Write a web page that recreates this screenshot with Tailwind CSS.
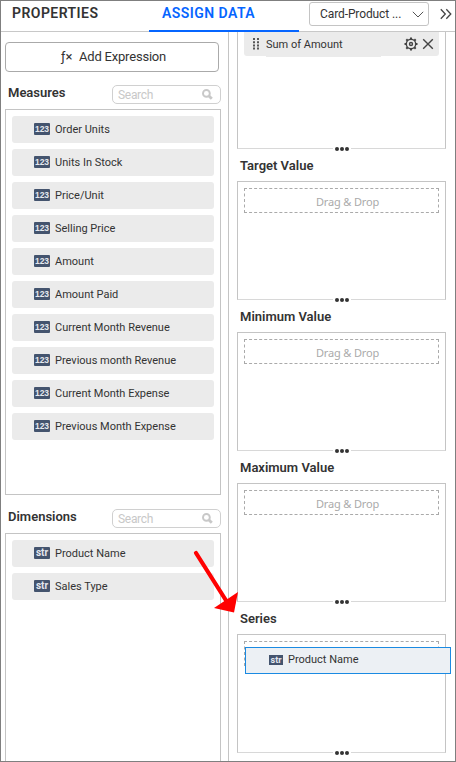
<!DOCTYPE html>
<html lang="en">
<head>
<meta charset="utf-8">
<title>Assign Data</title>
<script src="https://cdn.jsdelivr.net/npm/@tailwindcss/browser@4"></script>
</head>
<body class="bg-white">
<div class="relative flex h-[762px] w-[456px] flex-col overflow-hidden border border-[#7f7f7f] bg-white font-[Roboto,sans-serif] text-[#333]">
  <header class="flex h-[31px] shrink-0 border-b border-[#c8c8c8]">
    <div class="w-[148px] pl-[11px] pt-[2px] text-[14px] leading-[20px] font-semibold tracking-[0.45px] whitespace-nowrap">PROPERTIES</div>
    <div class="h-[31px] w-[150px] border-b-2 border-[#0565ff] pl-[13px] pt-[2px] text-[14px] leading-[20px] font-semibold tracking-[0.45px] whitespace-nowrap text-[#0565ff]">ASSIGN DATA</div>
    <div class="mt-px ml-[10px] flex h-6 w-[120px] items-center justify-between rounded-[3px] border border-[#c4c4c4] pr-1 pl-[10px] text-[12px]">
      <span class="tracking-[-0.1px] whitespace-nowrap">Card-Product ...</span>
      <svg class="h-[7px] w-[12px]" viewBox="0 0 12 7" fill="none" stroke="#555"><path d="M.8.8 6 6 11.2.8"/></svg>
    </div>
    <svg class="mt-[7px] ml-[11px] h-[12px] w-[12px]" viewBox="0 0 12 12" fill="none" stroke="#444" stroke-width="1.3"><path d="M.8 1.2 5.3 6 .8 10.8M6.3 1.2 10.8 6l-4.5 4.8"/></svg>
  </header>

  <div class="flex min-h-0 flex-1">
    <aside class="flex w-[228px] shrink-0 flex-col border-r border-[#c4c4c4] pt-[10px] pr-[7px] pl-1">
      <button class="flex h-[30px] w-[214px] shrink-0 items-center rounded-[4px] border border-[#aaa] pl-[55px] text-[13px]">
        <span class="w-[18px] text-left whitespace-nowrap">ƒ×</span><span class="tracking-[-0.2px]">Add Expression</span>
      </button>
      <div class="mt-[13px] flex h-[19px] shrink-0 items-center justify-between">
        <h2 class="relative -top-[2px] pl-[3px] text-[13px] font-semibold">Measures</h2>
        <div class="flex h-[19px] w-[109px] items-center justify-between rounded-[5px] border border-[#d0d0d0] pr-[7px] pl-[5px] text-[12px] tracking-[-0.3px] text-[#c8c8c8]"><span>Search</span>
          <svg class="h-[11px] w-[11px]" viewBox="0 0 11 11" fill="none" stroke="#c8c8c8" stroke-width="1.9"><circle cx="4.4" cy="4.4" r="3.4"/><path d="m7 7 2.8 2.8" stroke-width="2.8"/></svg>
        </div>
      </div>
      <div id="measures" class="mt-[5px] flex h-[386px] shrink-0 flex-col gap-1.5 border border-[#c4c4c4] p-1.5"></div>
      <div class="mt-[14px] flex h-[19px] shrink-0 items-center justify-between">
        <h2 class="relative -top-[2px] pl-[3px] text-[13px] font-semibold">Dimensions</h2>
        <div class="flex h-[19px] w-[109px] items-center justify-between rounded-[5px] border border-[#d0d0d0] pr-[7px] pl-[5px] text-[12px] tracking-[-0.3px] text-[#c8c8c8]"><span>Search</span>
          <svg class="h-[11px] w-[11px]" viewBox="0 0 11 11" fill="none" stroke="#c8c8c8" stroke-width="1.9"><circle cx="4.4" cy="4.4" r="3.4"/><path d="m7 7 2.8 2.8" stroke-width="2.8"/></svg>
        </div>
      </div>
      <div id="dimensions" class="mt-[5px] flex flex-1 flex-col gap-1.5 border border-b-0 border-[#c4c4c4] p-1.5"></div>
    </aside>

    <main id="zones" class="w-[226px] pl-2">
      <section class="relative h-[117px] w-[209px] border border-t-0 border-b-[#d8d8d8] border-[#c4c4c4] px-1.5">
        <div class="flex h-6 items-center rounded-b-[3px] bg-[#ebebeb] pr-[5px] pl-[9px]">
          <svg class="h-[12px] w-[6px]" viewBox="0 0 6 12" fill="#555"><path d="M0 0h2v2H0zM4 0h2v2H4zM0 3.2h2v2H0zM4 3.2h2v2H4zM0 6.4h2v2H0zM4 6.4h2v2H4zM0 9.6h2v2H0zM4 9.6h2v2H4z"/></svg>
          <span class="ml-[7px] flex-1 pt-[2px] text-[11px]">Sum of Amount</span>
          <svg class="h-[14px] w-[14px]" viewBox="0 0 14 14" fill="none" stroke="#444"><circle cx="7" cy="7" r="4.7" stroke-width="1.4"/><circle cx="7" cy="7" r="1.5" stroke-width="1.4"/><path d="M7 .5v2M7 11.5v2M.5 7h2M11.5 7h2M2.3 2.3l1.4 1.4M10.3 10.3l1.4 1.4M11.7 2.3l-1.4 1.4M3.7 10.3l-1.4 1.4" stroke-width="2"/></svg>
          <svg class="ml-[4px] h-[12px] w-[12px]" viewBox="0 0 12 12" fill="none" stroke="#444" stroke-width="1.4"><path d="m1.2 1.2 9.6 9.6M10.8 1.2l-9.6 9.6"/></svg>
        </div>
        <div class="ml-[22px] h-px w-[115px] bg-[#ebebeb]"></div>
        <div class="absolute -bottom-[3px] left-[95px] flex h-[5px] w-[18px] items-center justify-center gap-px bg-white"><i class="size-1 rounded-full bg-[#333]"></i><i class="size-1 rounded-full bg-[#333]"></i><i class="size-1 rounded-full bg-[#333]"></i></div>
      </section>
    </main>
  </div>

  <div class="absolute top-[646px] left-[244px] flex h-[27px] w-[206px] items-center border border-[#1a8ae2] bg-[#ecf0f4] pl-[23px] text-[11px]">
    <span class="mb-px flex h-[10px] w-[14px] items-center justify-center bg-[#44546e] text-[9px] leading-[10px] font-bold text-[#e4e8ee]">str</span>
    <span class="ml-[5px]">Product Name</span>
  </div>
  <svg class="absolute top-[549px] left-[192px] h-[66px] w-[48px]" viewBox="193 550 48 66"><path d="m196 553 31 49" stroke="red" stroke-width="4.2" stroke-linecap="round"/><path d="m238 592-24 16 20 4.5z" fill="red"/></svg>
</div>
<script>
  const field = (tag, name) => `<div class="flex h-[27px] shrink-0 items-center rounded-[3px] bg-[#ebebeb] pl-[22px] text-[11px]"><span class="mb-px flex h-[12px] w-4 items-center justify-center rounded-[1px] bg-[#44546e] font-bold text-[#e4e8ee] ${tag === 'str' ? 'text-[10px] leading-[12px]' : 'font-[Liberation_Sans,sans-serif] text-[8.5px] leading-[12px]'}">${tag}</span><span class="ml-[5px] pt-px">${name}</span></div>`;
  document.getElementById('measures').innerHTML = ['Order Units', 'Units In Stock', 'Price/Unit', 'Selling Price', 'Amount', 'Amount Paid', 'Current Month Revenue', 'Previous month Revenue', 'Current Month Expense', 'Previous Month Expense'].map(n => field('123', n)).join('');
  document.getElementById('dimensions').innerHTML = ['Product Name', 'Sales Type'].map(n => field('str', n)).join('');
  document.getElementById('zones').insertAdjacentHTML('beforeend', ['Target Value', 'Minimum Value', 'Maximum Value', 'Series'].map(n => `
    <h2 class="h-8 pt-[7px] pl-[3px] text-[13px] leading-[20px] font-semibold">${n}</h2>
    <section class="relative h-[119px] w-[209px] border border-[#c4c4c4] border-b-[#d8d8d8] p-1.5">
      <div class="flex h-[25px] items-center justify-center border border-dashed border-[#aaa] pt-[4px] pl-[12px] font-[Noto_Sans,sans-serif] text-[11px] tracking-[-0.15px] text-[#aaa]">${n === 'Series' ? '' : 'Drag &amp; Drop'}</div>
      <div class="absolute -bottom-[3px] left-[95px] flex h-[5px] w-[18px] items-center justify-center gap-px bg-white"><i class="size-1 rounded-full bg-[#333]"></i><i class="size-1 rounded-full bg-[#333]"></i><i class="size-1 rounded-full bg-[#333]"></i></div>
    </section>`).join(''));
</script>
</body>
</html>
